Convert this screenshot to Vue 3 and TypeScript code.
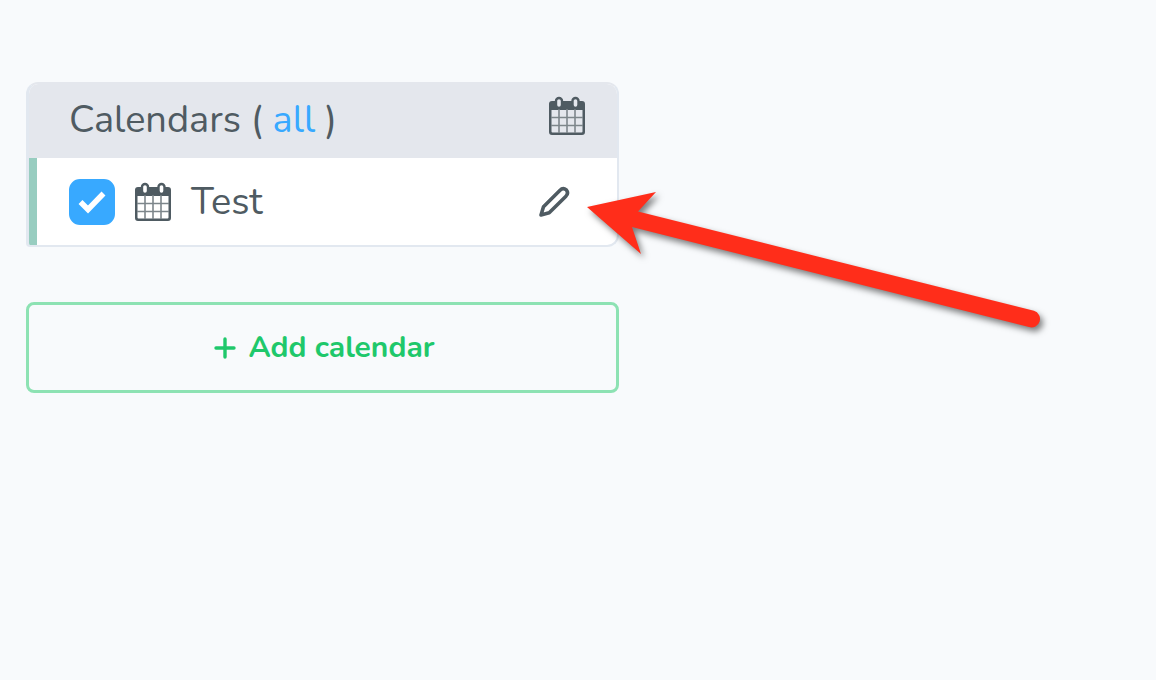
<script setup lang="ts">
import { ref, computed } from 'vue'

interface Calendar {
  id: string
  name: string
  active: boolean
}

const calendars = ref<Calendar[]>([{ id: 'test', name: 'Test', active: true }])
const allActive = computed(() => calendars.value.every((c) => c.active))

function toggleAll(): void {
  const next = !allActive.value
  calendars.value.forEach((c) => (c.active = next))
}
</script>

<template>
  <main class="page">
    <div class="sidebar">
      <section class="panel">
        <header class="panel-head">
          <h2 class="title">Calendars ( <a href="#" class="all" @click.prevent="toggleAll">all</a> )</h2>
          <svg class="cal-icon" viewBox="0 0 38 40" aria-hidden="true">
            <path class="solid" fill-rule="evenodd" d="M4 5H34Q37 5 37 8V36Q37 39 34 39H4Q1 39 1 36V8Q1 5 4 5ZM3.500 14V35.500Q3.500 36.500 4.500 36.500H33.500Q34.500 36.500 34.500 35.500V14Z" />
            <path class="lines" d="M11 13V37M19 13V37M27 13V37M3 21.500H35M3 29.500H35" />
            <rect class="ring ring-head" x="8" y="2" width="6" height="10" rx="3" />
            <rect class="ring ring-head" x="24.500" y="2" width="6" height="10" rx="3" />
          </svg>
        </header>
        <ul class="list">
          <li v-for="cal in calendars" :key="cal.id" class="row">
            <span class="check">
              <input :id="cal.id" v-model="cal.active" type="checkbox" class="box" />
              <svg v-if="cal.active" class="tick" viewBox="0 0 46 46" aria-hidden="true">
                <path d="M11.500 23L19 30.500L34.500 14.500" />
              </svg>
            </span>
            <svg class="cal-icon" viewBox="0 0 38 40" aria-hidden="true">
              <path class="solid" fill-rule="evenodd" d="M4 5H34Q37 5 37 8V36Q37 39 34 39H4Q1 39 1 36V8Q1 5 4 5ZM3.500 14V35.500Q3.500 36.500 4.500 36.500H33.500Q34.500 36.500 34.500 35.500V14Z" />
              <path class="lines" d="M11 13V37M19 13V37M27 13V37M3 21.500H35M3 29.500H35" />
              <rect class="ring" x="8" y="2" width="6" height="10" rx="3" />
              <rect class="ring" x="24.500" y="2" width="6" height="10" rx="3" />
            </svg>
            <label class="name" :for="cal.id">{{ cal.name }}</label>
            <button type="button" class="edit" aria-label="Edit calendar">
              <svg viewBox="0 0 34 34" aria-hidden="true">
                <path d="M4 30L6.500 21.800L22.800 5.500Q26 2.200 29.300 4.900Q32 8.200 28.700 11.500L12.200 27.800Z" />
              </svg>
            </button>
          </li>
        </ul>
      </section>
      <button type="button" class="add">
        <svg class="plus" viewBox="0 0 22 22" aria-hidden="true"><path d="M11 2V20M2 11H20" /></svg>
        Add calendar
      </button>
      <svg class="arrow" viewBox="0 0 480 160" aria-hidden="true">
        <path d="M7 27L76 12L58 31.500L454 130.800A8.200 8.200 0 0 1 449 147L52 47L61 74Z" />
      </svg>
    </div>
  </main>
</template>

<style>
body {
  background: #f8fafc;
}
</style>

<style scoped>
.page {
  box-sizing: border-box;
  min-height: 100vh;
  padding: 82px 26px 32px;
  overflow: hidden;
  background: #f8fafc;
  color: #4f5b62;
  font-family: Nunito, Lato, "Open Sans", sans-serif;
}

.sidebar {
  position: relative;
  max-width: 593px;
}

.panel {
  box-sizing: border-box;
  overflow: hidden;
  border: 2px solid #e2e8f0;
  border-left-width: 3px;
  border-top-color: #e4e7ed;
  border-radius: 12px 12px 12px 4px;
  background: #fff;
}

.panel-head {
  display: flex;
  align-items: flex-start;
  justify-content: space-between;
  box-sizing: border-box;
  height: 74px;
  padding: 12px 31px 0 40px;
  background: #e4e7ed;
}

.title {
  margin: 0;
  font-size: 38px;
  font-weight: 400;
  line-height: 48px;
}

.all {
  color: #38a9ff;
  text-decoration: none;
}

.cal-icon {
  flex: none;
  width: 38px;
  height: 40px;
}

.solid {
  fill: #4f5b62;
}

.lines {
  fill: none;
  stroke: #7d868b;
  stroke-width: 1.6;
}

.ring {
  fill: #fff;
  stroke: #4f5b62;
  stroke-width: 2.4;
}

.ring-head {
  fill: #e4e7ed;
}

.list {
  margin: 0;
  padding: 0;
  list-style: none;
}

.row {
  display: flex;
  align-items: center;
  box-sizing: border-box;
  height: 87px;
  padding: 0 46px 0 32px;
  border-left: 8px solid #98cdc0;
}

.check {
  position: relative;
  width: 46px;
  height: 46px;
  margin-right: 19px;
}

.box {
  display: block;
  width: 46px;
  height: 46px;
  margin: 0;
  appearance: none;
  border: 2px solid #38a9ff;
  border-radius: 11px;
}

.box:checked {
  background: #38a9ff;
}

.tick {
  position: absolute;
  inset: 0;
  pointer-events: none;
}

.tick path {
  fill: none;
  stroke: #fff;
  stroke-width: 5.5;
}

.name {
  flex: 1;
  margin-left: 19px;
  font-size: 38px;
  line-height: 48px;
}

.edit {
  width: 34px;
  height: 34px;
  padding: 0;
  border: 0;
  background: none;
}

.edit svg {
  display: block;
}

.edit path {
  fill: none;
  stroke: #4f5b62;
  stroke-width: 3.6;
  stroke-linejoin: round;
}

.add {
  display: flex;
  align-items: center;
  justify-content: center;
  gap: 12px;
  box-sizing: border-box;
  width: 100%;
  height: 91px;
  margin-top: 55px;
  padding: 0 4px 0 8px;
  border: 3px solid #8de2b3;
  border-radius: 8px;
  background: transparent;
  color: #1fc86b;
  font-family: inherit;
  font-size: 30px;
  font-weight: 700;
  line-height: 40px;
}

.plus {
  width: 22px;
  height: 22px;
}

.plus path {
  stroke: #1fc86b;
  stroke-width: 3.4;
  stroke-linecap: round;
}

/* Callout lying over the panel, pointing at the edit button */
.arrow {
  position: absolute;
  top: 98px;
  left: calc(100% - 39px);
  width: 480px;
  height: 160px;
  overflow: visible;
  pointer-events: none;
  filter: drop-shadow(3px 4px 3px rgba(0, 0, 0, 0.5));
}

.arrow path {
  fill: #ff2d1a;
}
</style>
